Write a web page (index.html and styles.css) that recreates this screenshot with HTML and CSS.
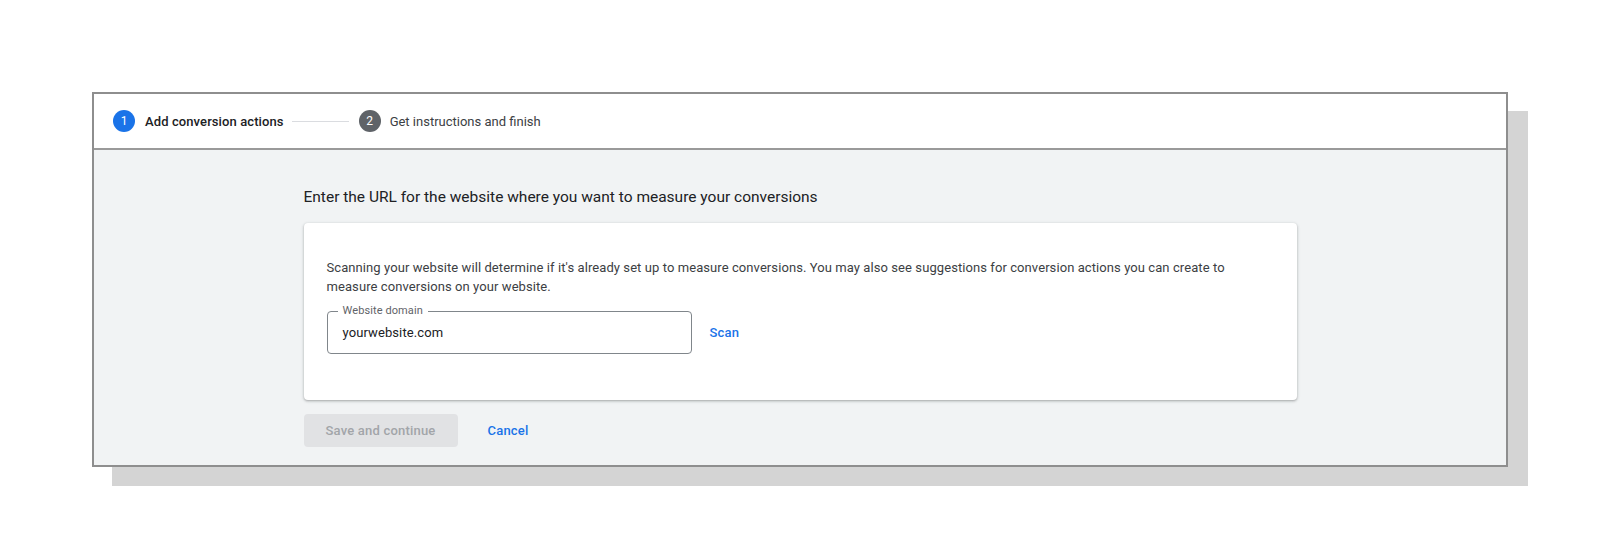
FILE: index.html
```html
<!DOCTYPE html>
<html lang="en">
<head>
<meta charset="utf-8">
<title>Add conversion actions</title>
<link rel="stylesheet" href="styles.css">
</head>
<body>
<div class="stage">
  <div class="frame">
    <div class="stepper">
      <div class="step active">
        <span class="step-num">1</span>
        <span class="step-label">Add conversion actions</span>
      </div>
      <span class="step-line"></span>
      <div class="step">
        <span class="step-num">2</span>
        <span class="step-label">Get instructions and finish</span>
      </div>
    </div>
    <div class="content">
      <div class="column">
        <h1 class="title">Enter the URL for the website where you want to measure your conversions</h1>
        <div class="card">
          <p class="desc">Scanning your website will determine if it's already set up to measure conversions. You may also see suggestions for conversion actions you can create to measure conversions on your website.</p>
          <div class="field-row">
            <div class="field">
              <span class="field-label">Website domain</span>
              <span class="field-value">yourwebsite.com</span>
            </div>
            <button class="link-btn scan">Scan</button>
          </div>
        </div>
        <div class="actions">
          <button class="primary-btn" disabled>Save and continue</button>
          <button class="link-btn cancel">Cancel</button>
        </div>
      </div>
    </div>
  </div>
</div>
</body>
</html>
```

FILE: styles.css
```css
* { box-sizing: border-box; }
html, body { margin: 0; padding: 0; background: #ffffff; }
body {
  min-height: 100vh;
  font-family: Roboto, "Liberation Sans", sans-serif;
  color: #202124;
}

.stage {
  min-height: 559px;
  padding: 92px 0 0 92px;
}

.frame {
  width: 1416px;
  border: 2px solid #8e8e8e;
  background: #f1f3f4;
  box-shadow: 20px 19px 0 0 #d4d4d4;
}

.stepper {
  height: 56px;
  background: #ffffff;
  border-bottom: 2px solid #9a9a9a;
  display: flex;
  align-items: center;
  padding-left: 19px;
}

.step {
  display: flex;
  align-items: center;
  gap: 9px;
}

.step.active { gap: 10px; }

.step-num {
  width: 22px;
  height: 22px;
  border-radius: 50%;
  background: #5f6368;
  color: #ffffff;
  font-size: 12px;
  display: flex;
  align-items: center;
  justify-content: center;
}

.step.active .step-num { background: #1a73e8; }

.step-label {
  font-size: 13px;
  color: #3c4043;
}

.step.active .step-label {
  color: #202124;
  font-weight: 500;
  letter-spacing: 0.1px;
}

.step-line {
  width: 57px;
  height: 1px;
  background: #dadce0;
  margin: 0 10px 0 8px;
}

.content {
  padding: 35px 0 18px;
}

.column {
  width: 993px;
  margin: 0 auto;
}

.title {
  margin: 0 0 14px;
  font-size: 15.5px;
  line-height: 24px;
  font-weight: 400;
  color: #202124;
}

.card {
  background: #ffffff;
  border-radius: 4px;
  box-shadow: 0 1px 2px rgba(60, 64, 67, 0.3), 0 1px 3px 1px rgba(60, 64, 67, 0.12);
  padding: 35px 24px 46px 23px;
}

.desc {
  margin: 0 0 15px;
  font-size: 13px;
  line-height: 19px;
  color: #3c4043;
  letter-spacing: 0.08px;
}

.field-row {
  display: flex;
  align-items: center;
  gap: 18px;
}

.field {
  position: relative;
  width: 365px;
  height: 43px;
  border: 1px solid #80868b;
  border-radius: 4px;
  display: flex;
  align-items: center;
  padding: 0 15px;
}

.field-label {
  position: absolute;
  top: -8px;
  left: 10px;
  padding: 0 5px;
  background: #ffffff;
  font-size: 11px;
  line-height: 14px;
  color: #5f6368;
  letter-spacing: 0.1px;
}

.field-value {
  font-size: 13px;
  color: #202124;
  letter-spacing: 0.1px;
}

.link-btn {
  border: 0;
  background: none;
  padding: 0;
  font-family: inherit;
  font-size: 13px;
  font-weight: 500;
  color: #1a73e8;
  letter-spacing: 0.2px;
  cursor: pointer;
}

.actions {
  margin-top: 14px;
  display: flex;
  align-items: center;
  gap: 30px;
}

.primary-btn {
  width: 154px;
  height: 33px;
  border: 0;
  border-radius: 4px;
  background: #e1e2e4;
  color: #a2a5a9;
  font-family: inherit;
  font-size: 13px;
  font-weight: 500;
  letter-spacing: 0.2px;
}
```
